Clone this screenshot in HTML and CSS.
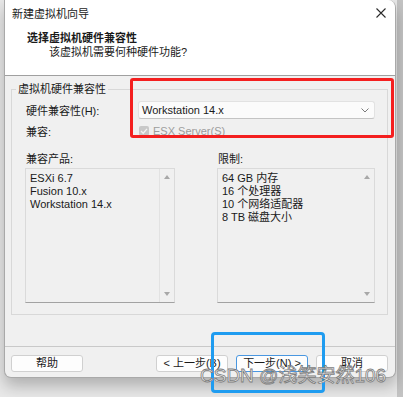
FILE: index.html
```html
<!DOCTYPE html>
<html lang="zh-CN">
<head>
  <meta charset="UTF-8">
  <title>新建虚拟机向导</title>
  <link rel="stylesheet" href="styles.css">
</head>
<body>
  <div class="window">
    <div class="header">
      <div class="titlebar">
        <span>新建虚拟机向导</span>
        <svg class="close" width="10" height="10" viewBox="0 0 10 10">
          <path d="M0.5 0.5 L9.5 9.5 M9.5 0.5 L0.5 9.5" stroke="#2b2b2b" stroke-width="1.1" fill="none"/>
        </svg>
      </div>
      <div class="heading">选择虚拟机硬件兼容性</div>
      <div class="subheading">该虚拟机需要何种硬件功能?</div>
    </div>

    <div class="content">
      <fieldset class="group">
        <legend>虚拟机硬件兼容性</legend>
        <div class="group-body">
          <div class="row">
            <span class="field-label">硬件兼容性(H):</span>
            <div class="select">
              <span>Workstation 14.x</span>
              <svg width="8" height="5" viewBox="0 0 8 5">
                <polyline points="0.5,0.5 4,4 7.5,0.5" stroke="#7a7a7a" stroke-width="1" fill="none"/>
              </svg>
            </div>
          </div>
          <div class="row row-check">
            <span class="field-label">兼容:</span>
            <span class="checkbox">
              <svg width="10" height="10" viewBox="0 0 10 10">
                <polyline points="2,5 4.2,7.2 8,2.8" stroke="#f4f4f4" stroke-width="1.3" fill="none"/>
              </svg>
            </span>
            <span class="disabled">ESX Server(S)</span>
          </div>

          <div class="lists">
            <div class="list-col list-col-left">
              <div class="list-title">兼容产品:</div>
              <div class="list">
                <div class="list-items">
                  <div>ESXi 6.7</div>
                  <div>Fusion 10.x</div>
                  <div>Workstation 14.x</div>
                </div>
                <div class="scroll scroll-split">
                  <span class="arrow-up"></span>
                  <span class="arrow-down"></span>
                </div>
              </div>
            </div>
            <div class="list-col list-col-right">
              <div class="list-title">限制:</div>
              <div class="list">
                <div class="list-items">
                  <div>64 GB 内存</div>
                  <div>16 个处理器</div>
                  <div>10 个网络适配器</div>
                  <div>8 TB 磁盘大小</div>
                </div>
                <div class="scroll">
                  <span class="arrow-up"></span>
                  <span class="arrow-down"></span>
                </div>
              </div>
            </div>
          </div>
        </div>
      </fieldset>

      <div class="footer">
        <button class="btn">帮助</button>
        <button class="btn btn-back">&lt; 上一步(B)</button>
        <button class="btn btn-primary">下一步(N) &gt;</button>
        <button class="btn">取消</button>
      </div>
    </div>
  </div>

  <!-- annotation boxes drawn over the dialog -->
  <div class="mark mark-red"></div>
  <div class="mark mark-blue"></div>
  <div class="watermark">CSDN @浅笑安然106</div>
</body>
</html>
```

FILE: styles.css
```css
body {
  margin: 0;
  width: 403px;
  height: 397px;
  position: relative;
  overflow: hidden;
  font-family: "Liberation Sans", "Noto Sans CJK SC", sans-serif;
  font-size: 11px;
  color: #1a1a1a;
  background: linear-gradient(to right, #e9e9e9 397px, #c4c4c4 397px);
}

.window {
  margin-left: 4px;
  width: 392px;
  height: 378px;
  box-sizing: border-box;
  display: flex;
  flex-direction: column;
  background-color: #f0f0f0;
  border: 1px solid #a9a9a9;
  border-top: none;
  border-radius: 0 8px 7px 7px;
  overflow: hidden;
  box-shadow: 0 8px 16px rgba(0, 0, 0, 0.25);
}

/* header */

.header {
  background-color: #fff;
  border-bottom: 1px solid #a0a0a0;
  height: 76px;
  box-sizing: border-box;
}

.titlebar {
  height: 26px;
  display: flex;
  align-items: center;
  justify-content: space-between;
  padding: 0 9px 0 7px;
}

.heading {
  margin-top: 5px;
  padding-left: 22px;
  line-height: 14px;
  font-weight: bold;
}

.subheading {
  padding-left: 44px;
  line-height: 14px;
}

/* body */

.content {
  flex: 1;
  display: flex;
  flex-direction: column;
  padding: 6px 7px 0 6px;
}

.group {
  margin: 0;
  min-width: 0;
  border: 1px solid #d8d8d8;
  padding: 5px 7px 11px 4px;
}

.group legend {
  padding: 0 2px;
  line-height: 14px;
}

.group-body {
  padding: 0 5px 0 9px;
}

.row {
  display: flex;
  align-items: center;
  height: 18px;
}

.row-check {
  margin-top: 5px;
  height: 14px;
}

.field-label {
  width: 112px;
  padding-left: 1px;
  flex-shrink: 0;
}

.select {
  flex: 1;
  height: 18px;
  box-sizing: border-box;
  display: flex;
  align-items: center;
  justify-content: space-between;
  padding: 0 5px 0 3px;
  background-color: #fbfbfb;
  border: 1px solid #e2e2e2;
  border-bottom-color: #c4c4c4;
  border-radius: 3px;
}

.checkbox {
  width: 10px;
  height: 10px;
  margin-left: 1px;
  background-color: #c8c8c8;
  border-radius: 2px;
  display: flex;
}

.disabled {
  margin-left: 4px;
  color: #9c9c9c;
}

.lists {
  margin-top: 14px;
  display: flex;
  gap: 42px;
}

.list-col-left {
  width: 150px;
}

.list-col-right {
  flex: 1;
}

.list-title {
  line-height: 14px;
  padding-left: 1px;
}

.list {
  margin-top: 2px;
  height: 135px;
  box-sizing: border-box;
  display: flex;
  border: 1px solid #dadada;
  border-bottom-color: #a2a2a2;
}

.list-items {
  flex: 1;
  padding: 3px 4px;
  line-height: 13px;
}

.scroll {
  width: 15px;
  display: flex;
  flex-direction: column;
  align-items: center;
  justify-content: space-between;
  padding: 6px 0 6px;
}

.scroll-split {
  width: 14px;
  border-left: 1px solid #e2e2e2;
}

.arrow-up {
  width: 0;
  height: 0;
  border-left: 3px solid transparent;
  border-right: 3px solid transparent;
  border-bottom: 4px solid #a8a8a8;
}

.arrow-down {
  width: 0;
  height: 0;
  border-left: 3px solid transparent;
  border-right: 3px solid transparent;
  border-top: 4px solid #a8a8a8;
}

/* footer */

.footer {
  margin: auto -7px 0 -6px;
  border-top: 1px solid #c9c9c9;
  padding: 8px 7px 5px 6px;
  display: flex;
  gap: 8px;
}

.btn {
  width: 72px;
  height: 17px;
  padding: 0;
  font-family: inherit;
  font-size: 11px;
  line-height: 15px;
  color: #1a1a1a;
  background-color: #fdfdfd;
  border: 1px solid #d0d0d0;
  border-radius: 3px;
}

.btn-back {
  margin-left: auto;
}

.btn-primary {
  border-color: #4a97e0;
}

/* annotations */

.mark {
  position: absolute;
  box-sizing: border-box;
  border-width: 3px;
  border-style: solid;
}

.mark-red {
  left: 130px;
  top: 78px;
  width: 264px;
  height: 60px;
  border-color: #f41f1f;
  border-radius: 3px;
}

.mark-blue {
  left: 211px;
  top: 332px;
  width: 114px;
  height: 61px;
  border-color: #1f9cf0;
  border-radius: 4px;
}

.watermark {
  position: absolute;
  left: 200px;
  top: 366px;
  font-size: 19px;
  line-height: 19px;
  white-space: nowrap;
  color: rgba(250, 250, 250, 0.92);
  -webkit-text-stroke: 0.8px #7c7c7c;
}
```
